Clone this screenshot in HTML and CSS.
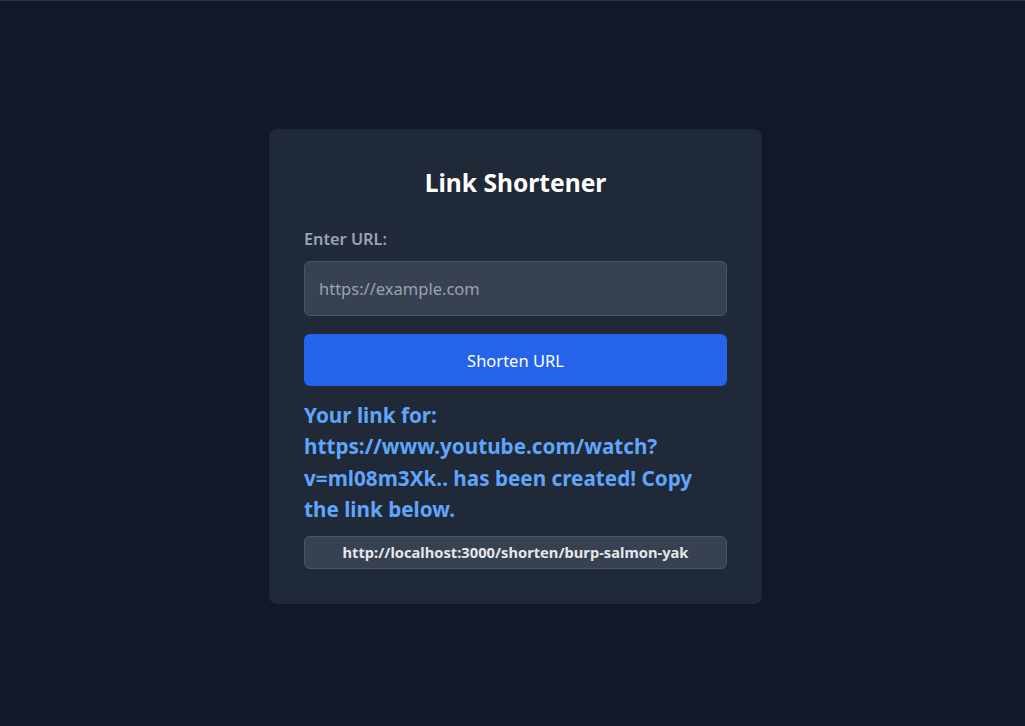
FILE: index.html
```html
<!DOCTYPE html>
<html lang="en">
<head>
<meta charset="utf-8">
<title>Link Shortener</title>
<link rel="stylesheet" href="styles.css">
</head>
<body>
<main class="page">
  <section class="card">
    <h1 class="title">Link Shortener</h1>
    <form class="form">
      <label class="label" for="url">Enter URL:</label>
      <input class="input" id="url" type="text" placeholder="https://example.com">
      <button class="btn" type="button">Shorten URL</button>
    </form>
    <p class="message">Your link for: https://www.youtube.com/watch?v=ml08m3Xk.. has been created! Copy the link below.</p>
    <div class="result">http://localhost:3000/shorten/burp-salmon-yak</div>
  </section>
</main>
</body>
</html>
```
FILE: styles.css
```css
* { box-sizing: border-box; }
html, body { margin: 0; padding: 0; }
body {
  background: #111827;
  font-family: "Noto Sans", "Open Sans", sans-serif;
  border-top: 1px solid #353535;
  min-height: 100vh;
}
.page {
  display: flex;
  justify-content: center;
  align-items: flex-start;
  padding: 128px 0 0 6px;
}
.card {
  width: 493px;
  background: #1f2937;
  border-radius: 8px;
  padding: 38px 35px 35px;
  display: flex;
  flex-direction: column;
}
.title {
  margin: 0;
  text-align: center;
  color: #ffffff;
  font-size: 24.6px;
  line-height: 32px;
  font-weight: 700;
}
.form {
  display: flex;
  flex-direction: column;
  margin: 0;
}
.label {
  margin-top: 28px;
  color: #9ca3af;
  font-size: 16.3px;
  line-height: 24px;
  font-weight: 600;
}
.input {
  margin-top: 10px;
  height: 55px;
  width: 100%;
  background: #374151;
  border: 1px solid #4b5563;
  border-radius: 6px;
  padding: 0 14px;
  font-family: inherit;
  font-size: 16.5px;
  color: #ffffff;
  outline: none;
}
.input::placeholder { color: #9ca3af; opacity: 1; }
.btn {
  margin-top: 18px;
  height: 52px;
  width: 100%;
  background: #2563eb;
  border: none;
  border-radius: 6px;
  color: #ffffff;
  font-family: inherit;
  font-size: 16.5px;
  font-weight: 400;
  cursor: pointer;
}
.message {
  margin: 14px 0 0;
  color: #60a5fa;
  font-size: 20.7px;
  line-height: 31.33px;
  font-weight: 700;
}
.result {
  margin-top: 11px;
  background: #374151;
  border: 1px solid #4b5563;
  border-radius: 6px;
  padding: 5px 0 6px;
  text-align: center;
  color: #e5e7eb;
  font-size: 14.7px;
  line-height: 20px;
  font-weight: 700;
}
```
